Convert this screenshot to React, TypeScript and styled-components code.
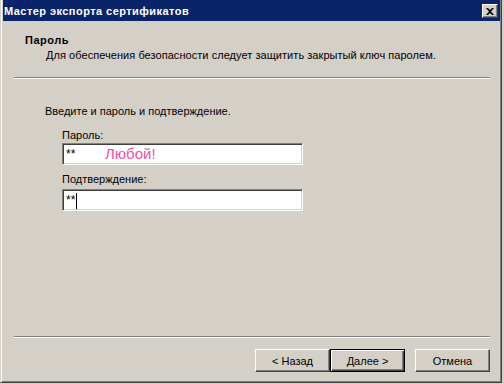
import React from "react";
import styled, { createGlobalStyle } from "styled-components";

const GlobalStyle = createGlobalStyle`
	html, body {
		margin: 0;
		padding: 0;
		background: #d4d0c8;
	}
	body {
		font-family: "Liberation Sans", "DejaVu Sans", sans-serif;
		font-size: 11px;
		color: #000;
	}
`;

const Window = styled.div`
	box-sizing: border-box;
	width: 502px;
	height: 383px;
	display: flex;
	flex-direction: column;
	background: #d4d0c8;
	border-left: 1px solid #d4d0c8;
	border-right: 1px solid #404040;
	border-bottom: 1px solid #404040;
	box-shadow: inset 1px 0 #ffffff, inset -1px -1px #808080;
`;

const TitleBar = styled.div`
	height: 21px;
	margin: 0 1px 0 2px;
	padding: 0 2px 0 1px;
	display: flex;
	align-items: center;
	justify-content: space-between;
	background: #0a246a;
	color: #fff;
	font-weight: bold;
	font-size: 11px;
	letter-spacing: 0.45px;
`;

const CloseButton = styled.div`
	box-sizing: border-box;
	width: 16px;
	height: 14px;
	margin-top: 1px;
	background: #d4d0c8;
	border: 1px solid;
	border-color: #fff #404040 #404040 #fff;
	box-shadow: inset -1px -1px #808080;
	display: flex;
	align-items: center;
	justify-content: center;
`;

const Header = styled.div`
	padding: 13px 0 0 24px;
`;

const HeaderTitle = styled.div`
	font-weight: bold;
	line-height: 13px;
	letter-spacing: 0.5px;
`;

const HeaderText = styled.div`
	line-height: 13px;
	margin-top: 2px;
	padding-left: 21px;
	letter-spacing: 0.05px;
`;

const Rule = styled.div<{ $top: number }>`
	height: 0;
	margin: ${({ $top }) => $top}px 11px 0 13px;
	border-top: 1px solid #808080;
	border-bottom: 1px solid #fff;
`;

const Body = styled.div`
	padding: 26px 0 0 44px;
	flex: 1;
`;

const Intro = styled.div`
	line-height: 13px;
`;

const Fields = styled.div`
	padding: 11px 0 0 17px;
	display: flex;
	flex-direction: column;
`;

const Label = styled.div<{ $top: number }>`
	line-height: 13px;
	margin-top: ${({ $top }) => $top}px;
`;

const TextBox = styled.div<{ $top: number }>`
	position: relative;
	box-sizing: border-box;
	width: 241px;
	height: 22px;
	margin-top: ${({ $top }) => $top}px;
	background: #fff;
	border: 1px solid;
	border-color: #808080 #fff #fff #808080;
	box-shadow: inset 1px 1px #404040, inset -1px -1px #d4d0c8;
	padding: 3px 0 0 3px;
	font-size: 12px;
	line-height: 14px;
	display: flex;
	align-items: flex-start;
`;

const Caret = styled.span`
	display: inline-block;
	width: 1px;
	height: 16px;
	margin: 0 0 0 1px;
	background: #000;
`;

const Note = styled.span`
	position: absolute;
	left: 42px;
	top: 1px;
	font-family: "Liberation Sans", Arial, sans-serif;
	font-size: 15px;
	line-height: 18px;
	color: #f24fa8;
`;

const Footer = styled.div`
	display: flex;
	justify-content: flex-end;
	padding: 11px 11px 10px 0;
`;

const Button = styled.button<{ $default?: boolean; $gap?: number }>`
	box-sizing: border-box;
	width: 75px;
	height: 23px;
	margin-left: ${({ $gap }) => $gap ?? 0}px;
	padding: 0;
	font-family: "Liberation Sans", "DejaVu Sans", sans-serif;
	font-size: 11px;
	color: #000;
	background: #d4d0c8;
	border: 1px solid;
	border-color: ${({ $default }) =>
		$default ? "#000" : "#fff #404040 #404040 #fff"};
	box-shadow: ${({ $default }) =>
		$default
			? "inset 1px 1px #fff, inset -1px -1px #404040, inset -2px -2px #808080"
			: "inset -1px -1px #808080"};
`;

const App: React.FC = () => {
	return (
		<>
			<GlobalStyle />
			<Window>
				<TitleBar>
					<span>Мастер экспорта сертификатов</span>
					<CloseButton>
						<svg width="8" height="7" viewBox="0 0 8 7">
							<path
								d="M0 0h2l2 2 2-2h2L5 3.5 8 7H6L4 5 2 7H0l3-3.5z"
								fill="#000"
							/>
						</svg>
					</CloseButton>
				</TitleBar>
				<Header>
					<HeaderTitle>Пароль</HeaderTitle>
					<HeaderText>
						Для обеспечения безопасности следует защитить закрытый ключ паролем.
					</HeaderText>
				</Header>
				<Rule $top={15} />
				<Body>
					<Intro>Введите и пароль и подтверждение.</Intro>
					<Fields>
						<Label $top={0}>Пароль:</Label>
						<TextBox $top={1}>
							**
							<Note>Любой!</Note>
						</TextBox>
						<Label $top={8}>Подтверждение:</Label>
						<TextBox $top={3}>
							**
							<Caret />
						</TextBox>
					</Fields>
				</Body>
				<Rule $top={0} />
				<Footer>
					<Button>&lt; Назад</Button>
					<Button $default>Далее &gt;</Button>
					<Button $gap={10}>Отмена</Button>
				</Footer>
			</Window>
		</>
	);
};

export default App;
